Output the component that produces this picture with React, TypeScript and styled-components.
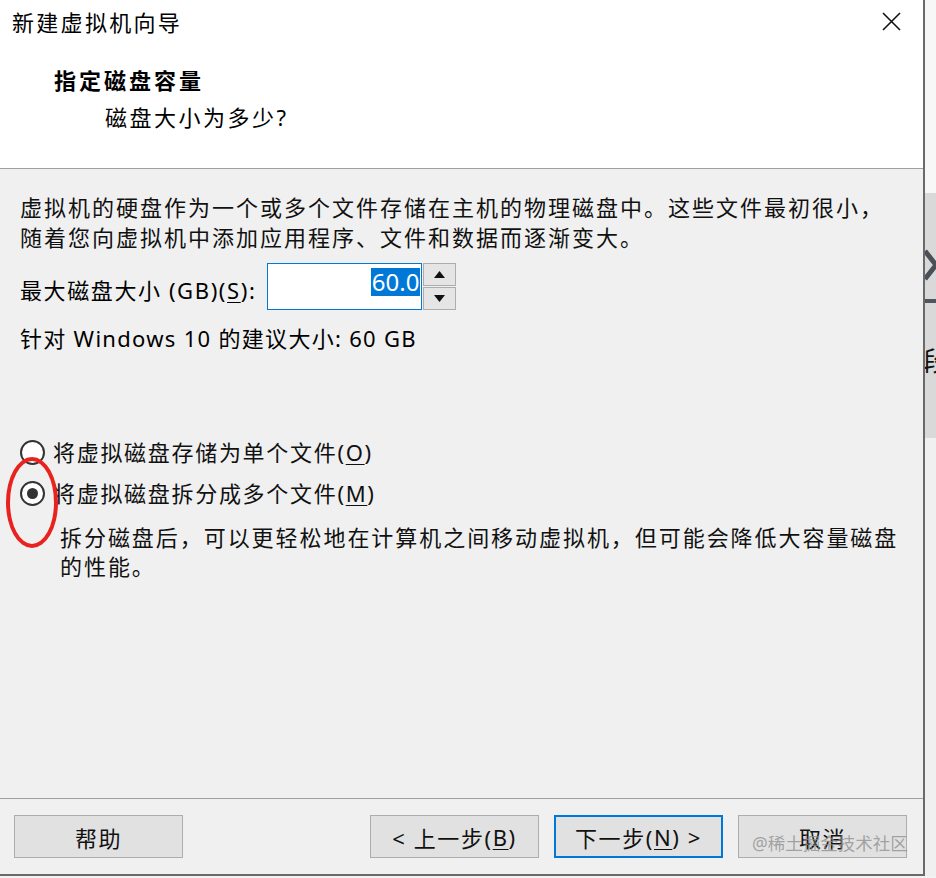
import React from "react";
import styled, { createGlobalStyle } from "styled-components";

const Global = createGlobalStyle`
  html, body { margin: 0; padding: 0; }
  body {
    width: 936px;
    height: 878px;
    overflow: hidden;
    background: #eeeeee;
    font-family: "Noto Sans", "Noto Sans CJK SC", sans-serif;
    color: #000;
  }
`;

const Screen = styled.div`
  position: relative;
  width: 936px;
  height: 878px;
  display: grid;
  grid-template-columns: 925px 11px;
  grid-template-rows: 876px 2px;
  background: #ececec;
`;

const Dialog = styled.div`
  display: flex;
  flex-direction: column;
  background: #f0f0f0;
  border-right: 2px solid #6a6a6a;
  border-bottom: 2px solid #6a6a6a;
  box-sizing: border-box;
`;

const Header = styled.div`
  height: 169px;
  box-sizing: border-box;
  background: #ffffff;
  border-bottom: 1px solid #a0a0a0;
  display: flex;
  flex-direction: column;
`;

const TitleBar = styled.div`
  height: 44px;
  display: flex;
  align-items: center;
  justify-content: space-between;
  padding: 0 22px 0 12px;
`;

const WindowTitle = styled.div`
  font-size: 22px;
  line-height: 30px;
  letter-spacing: 2.3px;
  color: #000;
`;

const CloseIcon = styled.svg`
  width: 19px;
  height: 19px;
  display: block;
  margin-top: -2px;
`;

const PageTitle = styled.div`
  margin: 21px 0 0 54px;
  font-size: 22px;
  font-weight: 700;
  line-height: 30px;
  letter-spacing: 3px;
`;

const PageSubtitle = styled.div`
  margin: 7px 0 0 105px;
  font-size: 22px;
  line-height: 30px;
  letter-spacing: 2.5px;
`;

const Body = styled.div`
  flex: 1;
  padding: 23px 20px 0 20px;
  display: flex;
  flex-direction: column;
  font-size: 22px;
  letter-spacing: 1.3px;
`;

const Paragraph = styled.div`
  line-height: 30px;
  letter-spacing: 2px;
  color: #111;
`;

const SizeRow = styled.div`
  margin-top: 11px;
  height: 47px;
  display: flex;
  align-items: center;
`;

const Label = styled.div`
  line-height: 30px;
  padding-top: 7px;
  margin-right: 11px;
  letter-spacing: 1.6px;
`;

const Key = styled.span`
  text-decoration: underline;
  text-underline-offset: 3px;
  text-decoration-thickness: 1px;
`;

const Spin = styled.div`
  display: flex;
  height: 47px;
`;

const SpinInput = styled.div`
  width: 152px;
  height: 45px;
  background: #fff;
  border: 1px solid #0078d7;
  display: flex;
  align-items: center;
  justify-content: flex-end;
  padding-right: 1px;
`;

const Selected = styled.span`
  background: #0078d7;
  color: #fff;
  font-size: 24px;
  letter-spacing: 0;
  line-height: 28px;
  padding: 0 1px;
  margin-top: -10px;
`;

const SpinButtons = styled.div`
  display: flex;
  flex-direction: column;
  gap: 1px;
  padding-left: 1px;
`;

const SpinButton = styled.div`
  width: 31px;
  height: 21px;
  background: #e5e5e5;
  border: 1px solid #adadad;
  display: flex;
  align-items: center;
  justify-content: center;
`;

const Recommend = styled.div`
  margin-top: 13px;
  line-height: 30px;
`;

const RadioGroup = styled.div`
  margin-top: 82px;
  display: flex;
  flex-direction: column;
  gap: 7px;
`;

const RadioRow = styled.div`
  height: 34px;
  display: flex;
  align-items: center;
  gap: 8px;
`;

const RadioCircle = styled.div<{ $checked?: boolean }>`
  width: 21px;
  height: 21px;
  border-radius: 50%;
  border: 2px solid #333;
  background: #fff;
  display: flex;
  align-items: center;
  justify-content: center;
  flex: none;
  &::after {
    content: "";
    width: 11px;
    height: 11px;
    border-radius: 50%;
    background: #333;
    display: ${(p) => (p.$checked ? "block" : "none")};
  }
`;

const RadioLabel = styled.div`
  line-height: 30px;
  letter-spacing: 1.7px;
  color: #111;
`;

const Description = styled.div`
  margin: 13px 0 0 40px;
  line-height: 29px;
  letter-spacing: 1.95px;
  color: #111;
`;

const Highlight = styled.div`
  position: absolute;
  left: 6px;
  top: 457px;
  width: 44px;
  height: 83px;
  border: 4px solid #e8231f;
  border-radius: 50%;
`;

const Footer = styled.div`
  height: 76px;
  box-sizing: border-box;
  border-top: 1px solid #a0a0a0;
  padding: 16px 16px 0 14px;
  display: flex;
  align-items: flex-start;
`;

const Spacer = styled.div`
  flex: 1;
`;

const ButtonGroup = styled.div`
  display: flex;
  gap: 15px;
`;

const Button = styled.div<{ $primary?: boolean }>`
  width: 169px;
  height: 43px;
  box-sizing: border-box;
  background: #e1e1e1;
  border: ${(p) => (p.$primary ? "2px solid #0078d7" : "1px solid #adadad")};
  display: flex;
  align-items: center;
  justify-content: center;
  font-size: 22px;
  letter-spacing: 1.6px;
  color: #111;
`;

const Watermark = styled.div`
  position: absolute;
  left: 752px;
  top: 830px;
  font-size: 17.5px;
  line-height: 26px;
  color: rgba(140, 140, 140, 0.75);
  white-space: nowrap;
`;

const BackdropStrip = styled.div`
  display: flex;
  flex-direction: column;
  overflow: hidden;
`;

const StripTop = styled.div`
  height: 193px;
  background: #f7f7f7;
`;

const StripPanel = styled.div`
  height: 245px;
  background: #d9d9d9;
  display: flex;
  flex-direction: column;
`;

const StripArrow = styled.svg`
  display: block;
  margin-top: 52px;
  width: 11px;
  height: 40px;
`;

const StripRule = styled.div`
  margin-top: 14px;
  height: 4px;
  background: #4f5660;
`;

const StripChar = styled.div`
  margin: 42px 0 0 -2px;
  font-size: 26px;
  line-height: 32px;
  color: #111;
  white-space: nowrap;
`;

const StripRest = styled.div`
  flex: 1;
  background: #f0f0f0;
`;

const BottomStrip = styled.div`
  grid-column: 1 / span 2;
  background: #f2f2f2;
`;

export default function App() {
  return (
    <>
      <Global />
      <Screen>
        <Dialog>
          <Header>
            <TitleBar>
              <WindowTitle>新建虚拟机向导</WindowTitle>
              <CloseIcon viewBox="0 0 19 19">
                <path d="M1 1 L18 18 M18 1 L1 18" stroke="#111" strokeWidth="1.6" fill="none" />
              </CloseIcon>
            </TitleBar>
            <PageTitle>指定磁盘容量</PageTitle>
            <PageSubtitle>磁盘大小为多少?</PageSubtitle>
          </Header>
          <Body>
            <Paragraph>
              虚拟机的硬盘作为一个或多个文件存储在主机的物理磁盘中。这些文件最初很小，
              <br />
              随着您向虚拟机中添加应用程序、文件和数据而逐渐变大。
            </Paragraph>
            <SizeRow>
              <Label>
                最大磁盘大小 (GB)(<Key>S</Key>):
              </Label>
              <Spin>
                <SpinInput>
                  <Selected>60.0</Selected>
                </SpinInput>
                <SpinButtons>
                  <SpinButton>
                    <svg width="11" height="7" viewBox="0 0 11 7">
                      <path d="M0 7 L5.5 0 L11 7 Z" fill="#111" />
                    </svg>
                  </SpinButton>
                  <SpinButton>
                    <svg width="11" height="7" viewBox="0 0 11 7">
                      <path d="M0 0 L11 0 L5.5 7 Z" fill="#111" />
                    </svg>
                  </SpinButton>
                </SpinButtons>
              </Spin>
            </SizeRow>
            <Recommend>针对 Windows 10 的建议大小: 60 GB</Recommend>
            <RadioGroup>
              <RadioRow>
                <RadioCircle />
                <RadioLabel>
                  将虚拟磁盘存储为单个文件(<Key>O</Key>)
                </RadioLabel>
              </RadioRow>
              <RadioRow>
                <RadioCircle $checked />
                <RadioLabel>
                  将虚拟磁盘拆分成多个文件(<Key>M</Key>)
                </RadioLabel>
              </RadioRow>
            </RadioGroup>
            <Description>
              拆分磁盘后，可以更轻松地在计算机之间移动虚拟机，但可能会降低大容量磁盘
              <br />
              的性能。
            </Description>
          </Body>
          <Footer>
            <Button>帮助</Button>
            <Spacer />
            <ButtonGroup>
              <Button>
                &lt; 上一步(<Key>B</Key>)
              </Button>
              <Button $primary>
                下一步(<Key>N</Key>) &gt;
              </Button>
              <Button>取消</Button>
            </ButtonGroup>
          </Footer>
        </Dialog>
        <BackdropStrip>
          <StripTop />
          <StripPanel>
            <StripArrow viewBox="0 0 11 40">
              <path d="M0 6 L11 20 L0 34" stroke="#4a5058" strokeWidth="5" fill="none" />
            </StripArrow>
            <StripRule />
            <StripChar>段</StripChar>
          </StripPanel>
          <StripRest />
        </BackdropStrip>
        <BottomStrip />
        <Highlight />
        <Watermark>@稀土掘金技术社区</Watermark>
      </Screen>
    </>
  );
}
